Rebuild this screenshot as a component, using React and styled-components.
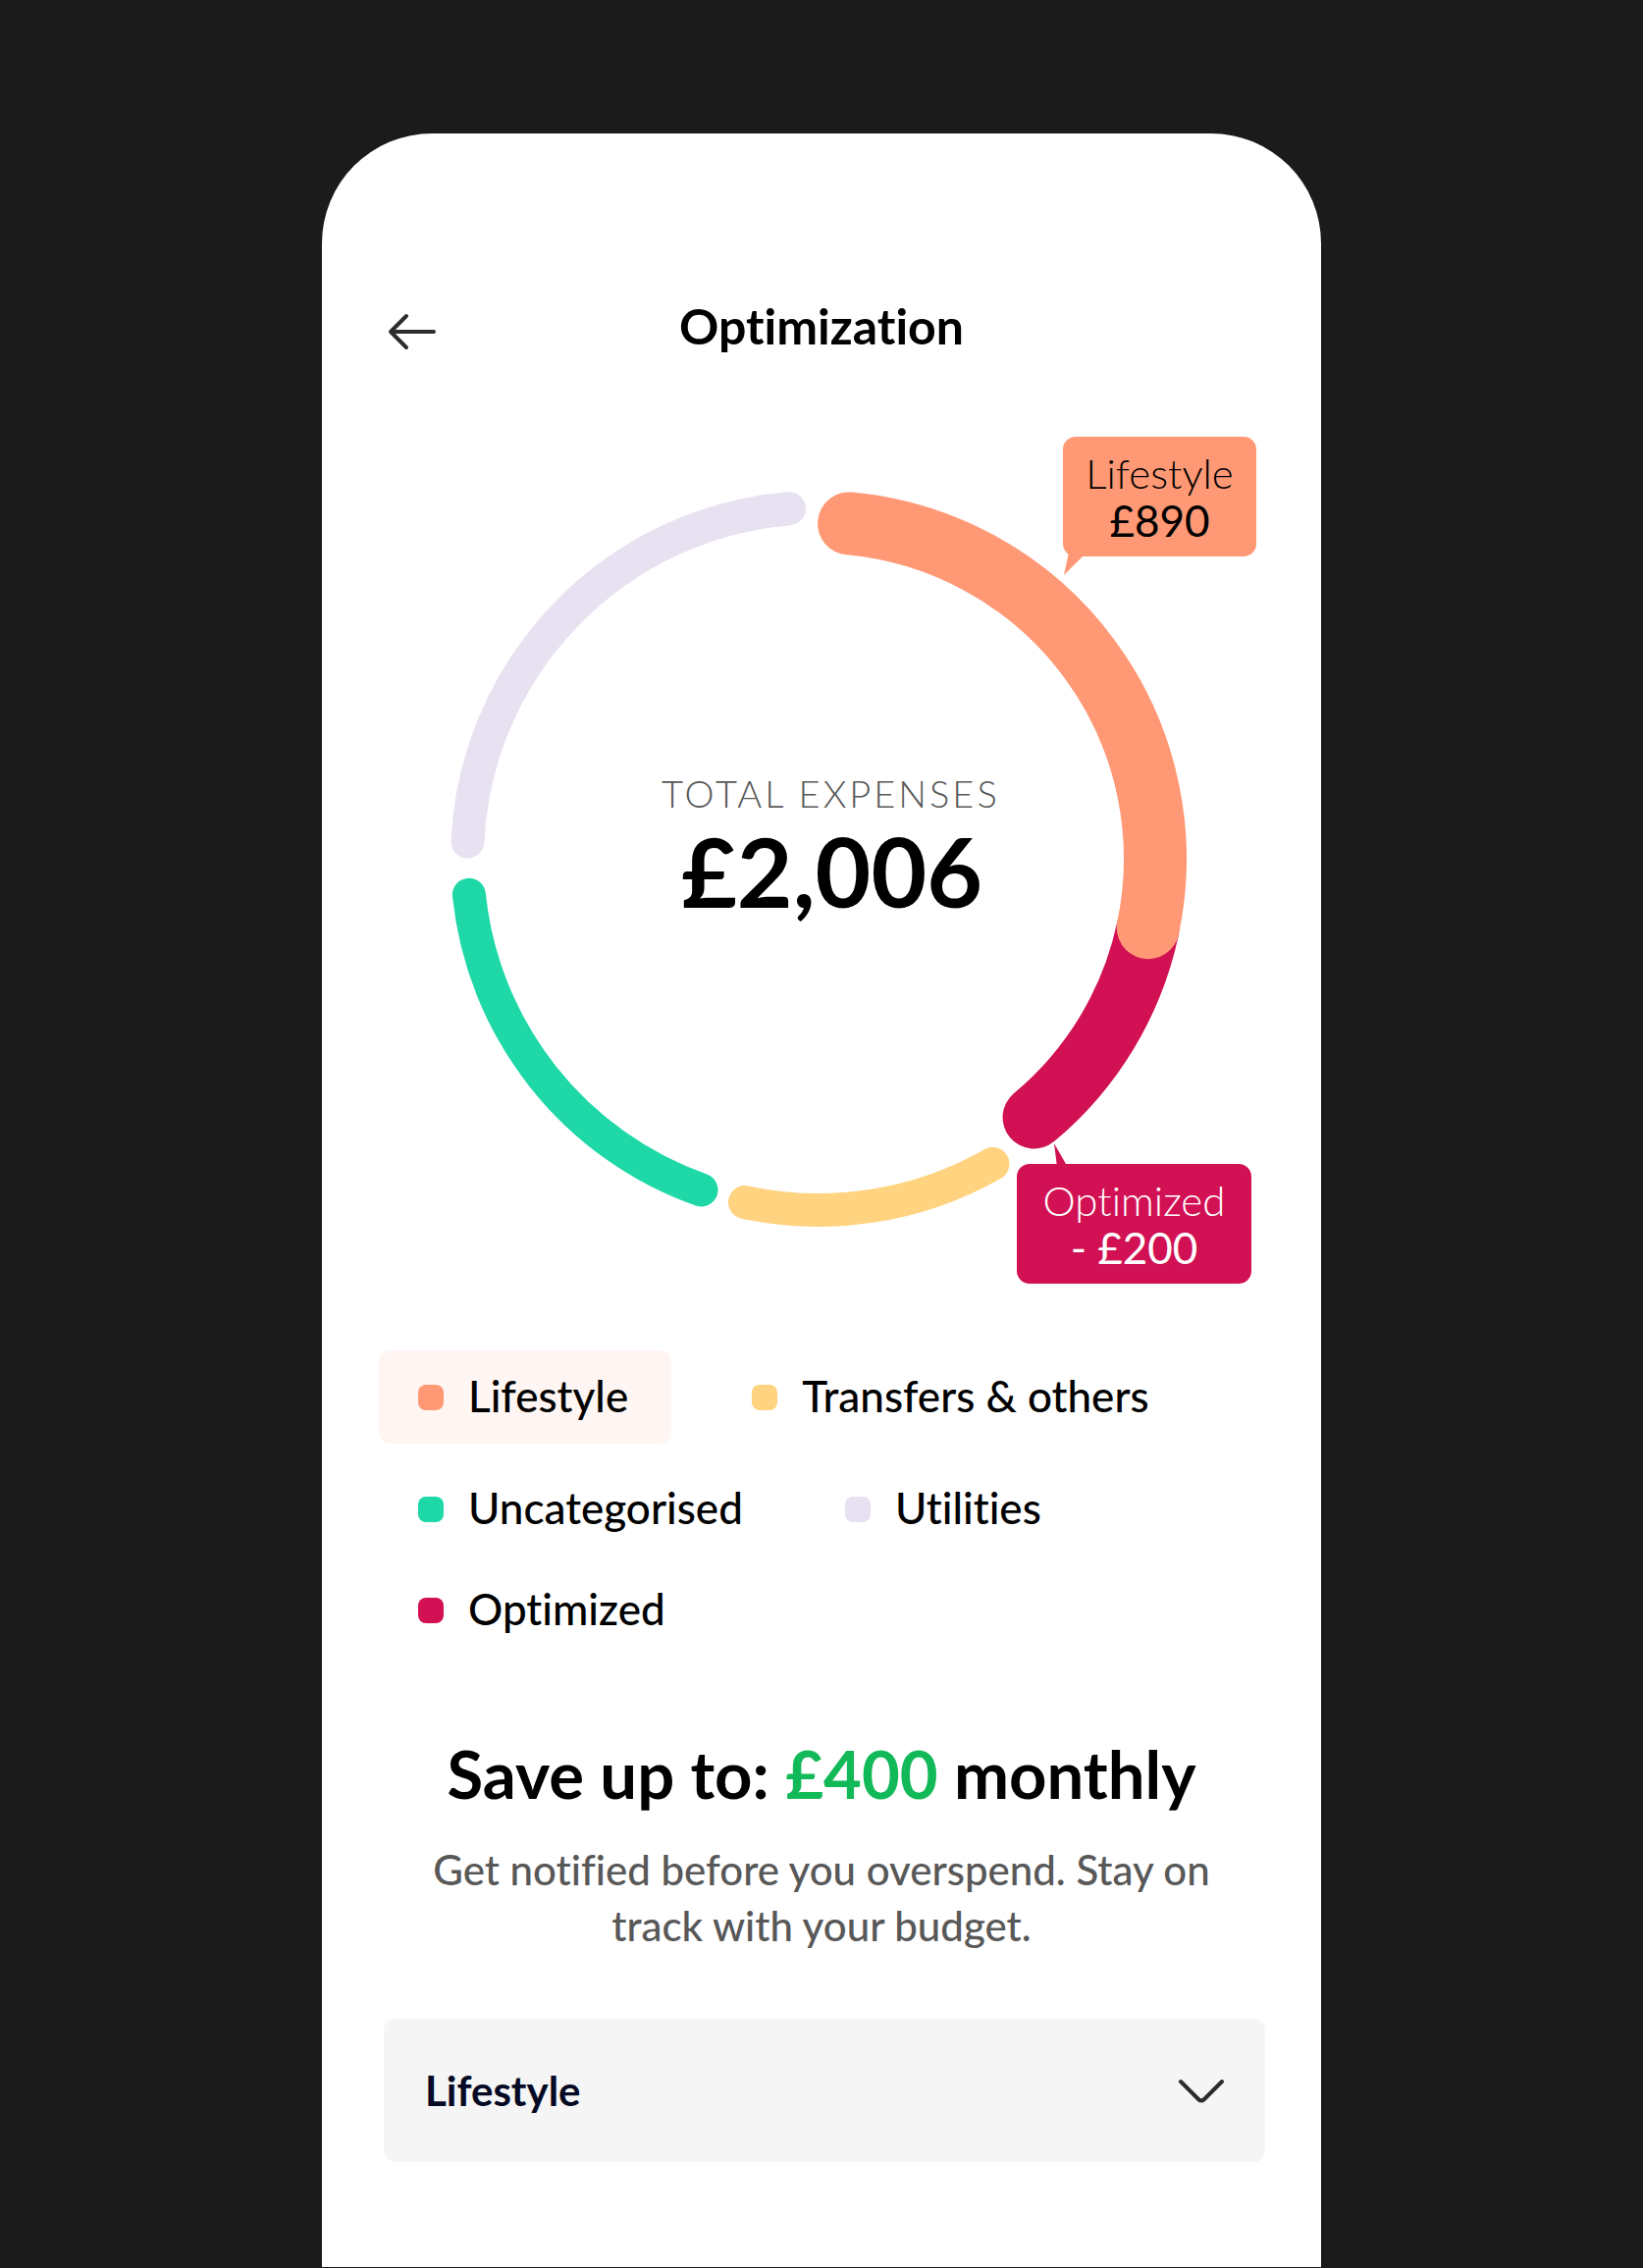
import React, { useState } from "react";
import styled, { createGlobalStyle } from "styled-components";

const colors = {
  page: "#1b1b1b",
  coral: "#ff9874",
  coralSoft: "#fff5f2",
  crimson: "#d21054",
  yellow: "#ffd37f",
  green: "#1fd8a8",
  lavender: "#e8e1f1",
  money: "#12b958",
  muted: "#585858",
};

const GlobalStyle = createGlobalStyle`
  *, *::before, *::after { box-sizing: border-box; }
  body {
    margin: 0;
    background: ${colors.page};
    font-family: Lato, "Open Sans", sans-serif;
    font-variant-ligatures: none;
    color: #000;
  }
`;

const Page = styled.div`
  min-height: 100vh;
  display: flex;
  justify-content: center;
  padding: 136px 0 1px;
`;

const Phone = styled.main`
  width: 100%;
  max-width: 1018px;
  padding: 166px 60px 104px;
  background: #fff;
  border-radius: 112px 112px 0 0;
`;

const Header = styled.header`
  display: grid;
  grid-template-columns: 64px 1fr 64px;
  align-items: end;
`;

const BackButton = styled.button`
  display: flex;
  justify-content: center;
  width: 64px;
  height: 48px;
  padding: 0;
  border: 0;
  background: none;
  cursor: pointer;
`;

const Title = styled.h1`
  margin: 0;
  font-size: 50px;
  line-height: 60px;
  font-weight: 700;
  text-align: center;
`;

const ChartSection = styled.section`
  display: flex;
  justify-content: center;
  padding: 138px 6px 126px 0;
`;

const ChartStage = styled.div`
  position: relative;
  width: 100%;
  max-width: 750px;
  aspect-ratio: 1;
`;

const Ring = styled.svg`
  display: block;
  width: 100%;
  height: 100%;
`;

const Total = styled.div`
  position: absolute;
  top: 287px;
  left: 215px;
`;

const TotalLabel = styled.div`
  font-size: 38px;
  line-height: 42px;
  font-weight: 300;
  letter-spacing: 3px;
  color: ${colors.muted};
`;

const TotalAmount = styled.div`
  padding-left: 20px;
  font-size: 98px;
  line-height: 116px;
  font-weight: 700;
`;

const Callout = styled.div`
  position: absolute;
  left: ${(p) => p.$left}px;
  top: ${(p) => p.$top}px;
  width: ${(p) => p.$width}px;
  padding: 13px 0;
  border-radius: 13px;
  background: ${(p) => p.$fill};
  color: ${(p) => p.$ink};
  font-size: 42px;
  line-height: 48px;
  text-align: center;
`;

const CalloutName = styled.div`
  font-weight: 300;
`;

const CalloutValue = styled.div`
  font-size: 44px;
  font-weight: 400;
`;

const Tail = styled.svg`
  position: absolute;
  left: ${(p) => p.$left}px;
  top: ${(p) => p.$top}px;
`;

const Legend = styled.section`
  display: flex;
  flex-direction: column;
  gap: 30px;
  margin-left: -2px;
`;

const LegendRow = styled.div`
  display: flex;
  flex-wrap: wrap;
  gap: ${(p) => p.$gap}px;
`;

const LegendItem = styled.div`
  display: flex;
  align-items: center;
  gap: 25px;
  height: ${(p) => (p.$tall ? 95 : 73)}px;
  padding: 0 44px 0 40px;
  border-radius: 12px;
  background: ${(p) => (p.$active ? colors.coralSoft : "transparent")};
`;

const Swatch = styled.span`
  width: 26px;
  height: 26px;
  border-radius: 8px;
  background: ${(p) => p.$color};
`;

const LegendText = styled.span`
  padding-bottom: 4px;
  font-size: 44px;
  line-height: 50px;
  font-weight: 500;
`;

const Savings = styled.section`
  padding: 92px 40px 66px;
  text-align: center;
`;

const SavingsTitle = styled.h2`
  margin: 0 0 32px;
  font-size: 67px;
  line-height: 76px;
  font-weight: 700;
`;

const Money = styled.span`
  color: ${colors.money};
`;

const SavingsText = styled.p`
  margin: 0;
  font-size: 42px;
  line-height: 57px;
  font-weight: 500;
  color: ${colors.muted};
`;

const SelectField = styled.div`
  display: grid;
  align-items: center;
  margin: 0 -3px 0 3px;
`;

const Select = styled.select`
  grid-area: 1 / 1;
  width: 100%;
  height: 146px;
  padding: 0 120px 0 42px;
  border: 0;
  border-radius: 12px;
  appearance: none;
  background: #f5f5f5;
  color: #060a24;
  font-family: inherit;
  font-size: 42px;
  font-weight: 700;
`;

const Chevron = styled.svg`
  grid-area: 1 / 1;
  justify-self: end;
  margin-right: 39px;
  pointer-events: none;
`;

const THIN = { radius: 358, width: 34 };
const THICK = { radius: 343, width: 64 };

// Angles run clockwise in degrees from twelve o'clock; later arcs lie on top.
const arcs = [
  { name: "Utilities", color: colors.lavender, from: 272.8, to: 355.2, ...THIN },
  { name: "Uncategorised", color: colors.green, from: 199.5, to: 264.1, ...THIN },
  { name: "Transfers & others", color: colors.yellow, from: 150.3, to: 192.1, ...THIN },
  { name: "Optimized", color: colors.crimson, from: 102, to: 140.2, ...THICK },
  { name: "Lifestyle", color: colors.coral, from: 5.2, to: 101.8, ...THICK },
];

function arcPath({ radius, from, to }) {
  const point = (deg) => {
    const a = (deg * Math.PI) / 180;
    return `${(375 + radius * Math.sin(a)).toFixed(2)} ${(375 - radius * Math.cos(a)).toFixed(2)}`;
  };
  return `M${point(from)}A${radius} ${radius} 0 0 1 ${point(to)}`;
}

const legendRows = [
  {
    gap: 42,
    tall: true,
    items: [
      { label: "Lifestyle", color: colors.coral, active: true },
      { label: "Transfers & others", color: colors.yellow },
    ],
  },
  {
    gap: 20,
    items: [
      { label: "Uncategorised", color: colors.green },
      { label: "Utilities", color: colors.lavender },
    ],
  },
  { gap: 20, items: [{ label: "Optimized", color: colors.crimson }] },
];

const categories = ["Lifestyle", "Transfers & others", "Uncategorised", "Utilities"];

function ExpenseChart() {
  return (
    <ChartStage>
      <Ring viewBox="0 0 750 750" role="img" aria-label="Expenses by category">
        {arcs.map((arc) => (
          <path
            key={arc.name}
            d={arcPath(arc)}
            fill="none"
            stroke={arc.color}
            strokeWidth={arc.width}
            strokeLinecap="round"
          />
        ))}
      </Ring>
      <Total>
        <TotalLabel>TOTAL EXPENSES</TotalLabel>
        <TotalAmount>£2,006</TotalAmount>
      </Total>
      <Callout $left={624} $top={-55} $width={197} $fill={colors.coral} $ink="#000">
        <CalloutName>Lifestyle</CalloutName>
        <CalloutValue>£890</CalloutValue>
        <Tail $left={0} $top={118} width="24" height="24" aria-hidden="true">
          <path d="M6 0L1 23L21 3V0Z" fill={colors.coral} />
        </Tail>
      </Callout>
      <Callout $left={577} $top={686} $width={239} $fill={colors.crimson} $ink="#fff">
        <CalloutName>Optimized</CalloutName>
        <CalloutValue>- £200</CalloutValue>
        <Tail $left={37} $top={-21} width="16" height="24" aria-hidden="true">
          <path d="M1 0L4 24H15L13 21Z" fill={colors.crimson} />
        </Tail>
      </Callout>
    </ChartStage>
  );
}

export default function App() {
  const [category, setCategory] = useState("Lifestyle");
  return (
    <>
      <GlobalStyle />
      <Page>
        <Phone>
          <Header>
            <BackButton type="button" aria-label="Back">
              <svg width="50" height="48" fill="none" stroke="#2b2c2d" strokeWidth="4" strokeLinecap="round" strokeLinejoin="round">
                <path d="M47 24H3M19 8L3 24L19 40" />
              </svg>
            </BackButton>
            <Title>Optimization</Title>
          </Header>
          <ChartSection>
            <ExpenseChart />
          </ChartSection>
          <Legend>
            {legendRows.map((row, i) => (
              <LegendRow key={i} $gap={row.gap}>
                {row.items.map((item) => (
                  <LegendItem key={item.label} $tall={row.tall} $active={item.active}>
                    <Swatch $color={item.color} />
                    <LegendText>{item.label}</LegendText>
                  </LegendItem>
                ))}
              </LegendRow>
            ))}
          </Legend>
          <Savings>
            <SavingsTitle>
              Save up to: <Money>£400</Money> monthly
            </SavingsTitle>
            <SavingsText>Get notified before you overspend. Stay on track with your budget.</SavingsText>
          </Savings>
          <SelectField>
            <Select aria-label="Category" value={category} onChange={(e) => setCategory(e.target.value)}>
              {categories.map((name) => (
                <option key={name}>{name}</option>
              ))}
            </Select>
            <Chevron width="52" height="28" fill="none" stroke="#2b2c2d" strokeWidth="4" strokeLinecap="round" aria-hidden="true">
              <path d="M5 5L23 23Q26 26 29 23L47 5" />
            </Chevron>
          </SelectField>
        </Phone>
      </Page>
    </>
  );
}
